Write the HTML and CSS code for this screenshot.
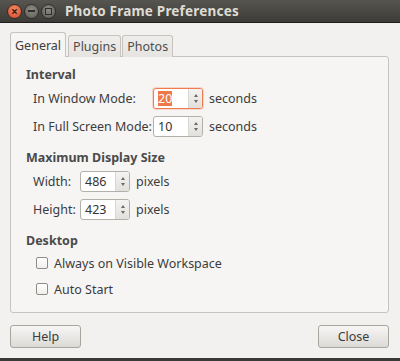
FILE: index.html
```html
<!DOCTYPE html>
<html lang="en">
<head>
    <meta charset="UTF-8">
    <title>Photo Frame Preferences</title>
    <link rel="stylesheet" href="styles.css">
</head>
<body>

<!-- Dialog Window -->
<div class="window">
    <div class="titlebar">
        <div class="controls">
            <span class="ctl ctl-close">&times;</span>
            <span class="ctl ctl-min"><i class="bar"></i></span>
            <span class="ctl ctl-max"><i class="box"></i></span>
        </div>
        <div class="title">Photo Frame Preferences</div>
    </div>

    <div class="content">
        <!-- Notebook Tabs -->
        <div class="tabs">
            <div class="tab active">General</div>
            <div class="tab">Plugins</div>
            <div class="tab">Photos</div>
        </div>

        <div class="panel">
            <div class="section">
                <div class="heading">Interval</div>
                <div class="row">
                    <span class="label label-wide">In Window Mode:</span>
                    <span class="spin focused"><span class="value"><span class="sel">20</span></span><span class="arrows"><i class="up"></i><i class="down"></i></span></span>
                    <span class="unit">seconds</span>
                </div>
                <div class="row">
                    <span class="label label-wide">In Full Screen Mode:</span>
                    <span class="spin"><span class="value">10</span><span class="arrows"><i class="up"></i><i class="down"></i></span></span>
                    <span class="unit">seconds</span>
                </div>
            </div>

            <div class="section">
                <div class="heading">Maximum Display Size</div>
                <div class="row">
                    <span class="label label-narrow">Width:</span>
                    <span class="spin"><span class="value">486</span><span class="arrows"><i class="up"></i><i class="down"></i></span></span>
                    <span class="unit">pixels</span>
                </div>
                <div class="row">
                    <span class="label label-narrow">Height:</span>
                    <span class="spin"><span class="value">423</span><span class="arrows"><i class="up"></i><i class="down"></i></span></span>
                    <span class="unit">pixels</span>
                </div>
            </div>

            <div class="section">
                <div class="heading">Desktop</div>
                <label class="check"><span class="box"></span>Always on Visible Workspace</label>
                <label class="check"><span class="box"></span>Auto Start</label>
            </div>
        </div>

        <!-- Dialog Buttons -->
        <div class="actions">
            <button class="btn">Help</button>
            <button class="btn">Close</button>
        </div>
    </div>
    <div class="bottom-edge"></div>
</div>

</body>
</html>
```

FILE: styles.css
```css
/* Base */
body {
    margin: 0;
    font-family: 'Noto Sans', 'Open Sans', sans-serif;
    font-size: 12.5px;
    color: #3c3c3c;
    background: #f2f1f0;
}

.window {
    width: 400px;
    height: 361px;
    display: flex;
    flex-direction: column;
    background: #f2f1f0;
    overflow: hidden;
}

/* Title Bar */
.titlebar {
    height: 22px;
    border-bottom: 1px solid #1e1e1c;
    background: linear-gradient(#56554f, #3c3b37);
    display: flex;
    align-items: center;
}

.controls {
    display: flex;
    gap: 2px;
    padding-left: 7px;
    width: 56px;
}

.ctl {
    width: 13px;
    height: 13px;
    border-radius: 50%;
    display: flex;
    align-items: center;
    justify-content: center;
    border: 1px solid #2e2d2a;
    background: radial-gradient(circle at 50% 35%, #8c8a83, #5d5c56);
}

.ctl-close {
    background: radial-gradient(circle at 50% 35%, #f28a63, #d9462a);
    color: #3b1c12;
    font-size: 12px;
    font-weight: bold;
    line-height: 13px;
}

.ctl .bar {
    width: 7px;
    height: 2px;
    background: #2f2e2b;
}

.ctl .box {
    width: 5px;
    height: 5px;
    border: 1px solid #2f2e2b;
}

.title {
    color: #dfdbd2;
    font-weight: bold;
    font-size: 13.5px;
    padding-left: 2px;
    letter-spacing: 0.2px;
}

/* Content */
.content {
    flex: 1;
    padding: 10px 11px 0 10px;
    display: flex;
    flex-direction: column;
}

.tabs {
    display: flex;
    align-items: flex-end;
    gap: 1px;
    height: 24px;
    position: relative;
    z-index: 1;
}

.tab {
    height: 21px;
    padding: 0 4px;
    border: 1px solid #c7c4bf;
    border-bottom: none;
    border-radius: 3px 3px 0 0;
    background: linear-gradient(#efeeec, #e6e4e1);
    color: #4c4c4c;
    display: flex;
    align-items: center;
}

.tab.active {
    height: 24px;
    background: #f6f5f4;
    color: #3c3c3c;
    padding: 0 4px 0 4px;
    margin-right: 1px;
}

.panel {
    height: 237px;
    margin-top: -1px;
    border: 1px solid #c7c4bf;
    border-radius: 0 3px 3px 3px;
    background: #f6f5f4;
    padding: 9px 15px 9px 15px;
}

.section + .section {
    margin-top: 9px;
}

.heading {
    height: 18px;
    line-height: 18px;
    font-weight: bold;
    color: #4a4a4a;
}

.row {
    height: 28px;
    display: flex;
    align-items: center;
    padding-left: 7px;
}

.label-wide {
    width: 120px;
}

.label-narrow {
    width: 47px;
}

/* Spin Button */
.spin {
    width: 50px;
    height: 21px;
    box-sizing: border-box;
    border: 1px solid #b3b0aa;
    border-radius: 3px;
    background: #ffffff;
    display: flex;
    overflow: hidden;
}

.spin.focused {
    border-color: #ef7c4e;
    box-shadow: 0 0 0 1px rgba(239, 124, 78, 0.25);
}

.value {
    flex: 1;
    padding-left: 4px;
    display: flex;
    align-items: center;
    color: #333;
}

.sel {
    background: #f07746;
    color: #ffffff;
    line-height: 15px;
}

.arrows {
    width: 13px;
    border-left: 1px solid #d9d7d3;
    background: linear-gradient(#f4f3f2, #e2e0dc);
    display: flex;
    flex-direction: column;
    align-items: center;
    justify-content: center;
    gap: 3px;
}

.arrows i {
    width: 0;
    height: 0;
    border-left: 2px solid transparent;
    border-right: 2px solid transparent;
}

.arrows .up {
    border-bottom: 3px solid #6a6966;
}

.arrows .down {
    border-top: 3px solid #6a6966;
}

.unit {
    padding-left: 6px;
}

/* Checkboxes */
.check {
    height: 26px;
    display: flex;
    align-items: center;
    padding-left: 10px;
}

.check .box {
    width: 12px;
    height: 12px;
    box-sizing: border-box;
    border: 1px solid #8e8c87;
    border-radius: 2px;
    background: linear-gradient(#ffffff, #efeeec);
    margin-right: 6px;
}

/* Buttons */
.actions {
    display: flex;
    justify-content: space-between;
    margin-top: 12px;
}

.btn {
    width: 71px;
    height: 23px;
    font-family: inherit;
    font-size: 12.5px;
    color: #3c3c3c;
    border: 1px solid #a9a6a0;
    border-radius: 3px;
    background: linear-gradient(#f7f6f5, #dcdad6);
    padding: 0;
}

.bottom-edge {
    height: 3px;
    background: #3a3935;
}
```
